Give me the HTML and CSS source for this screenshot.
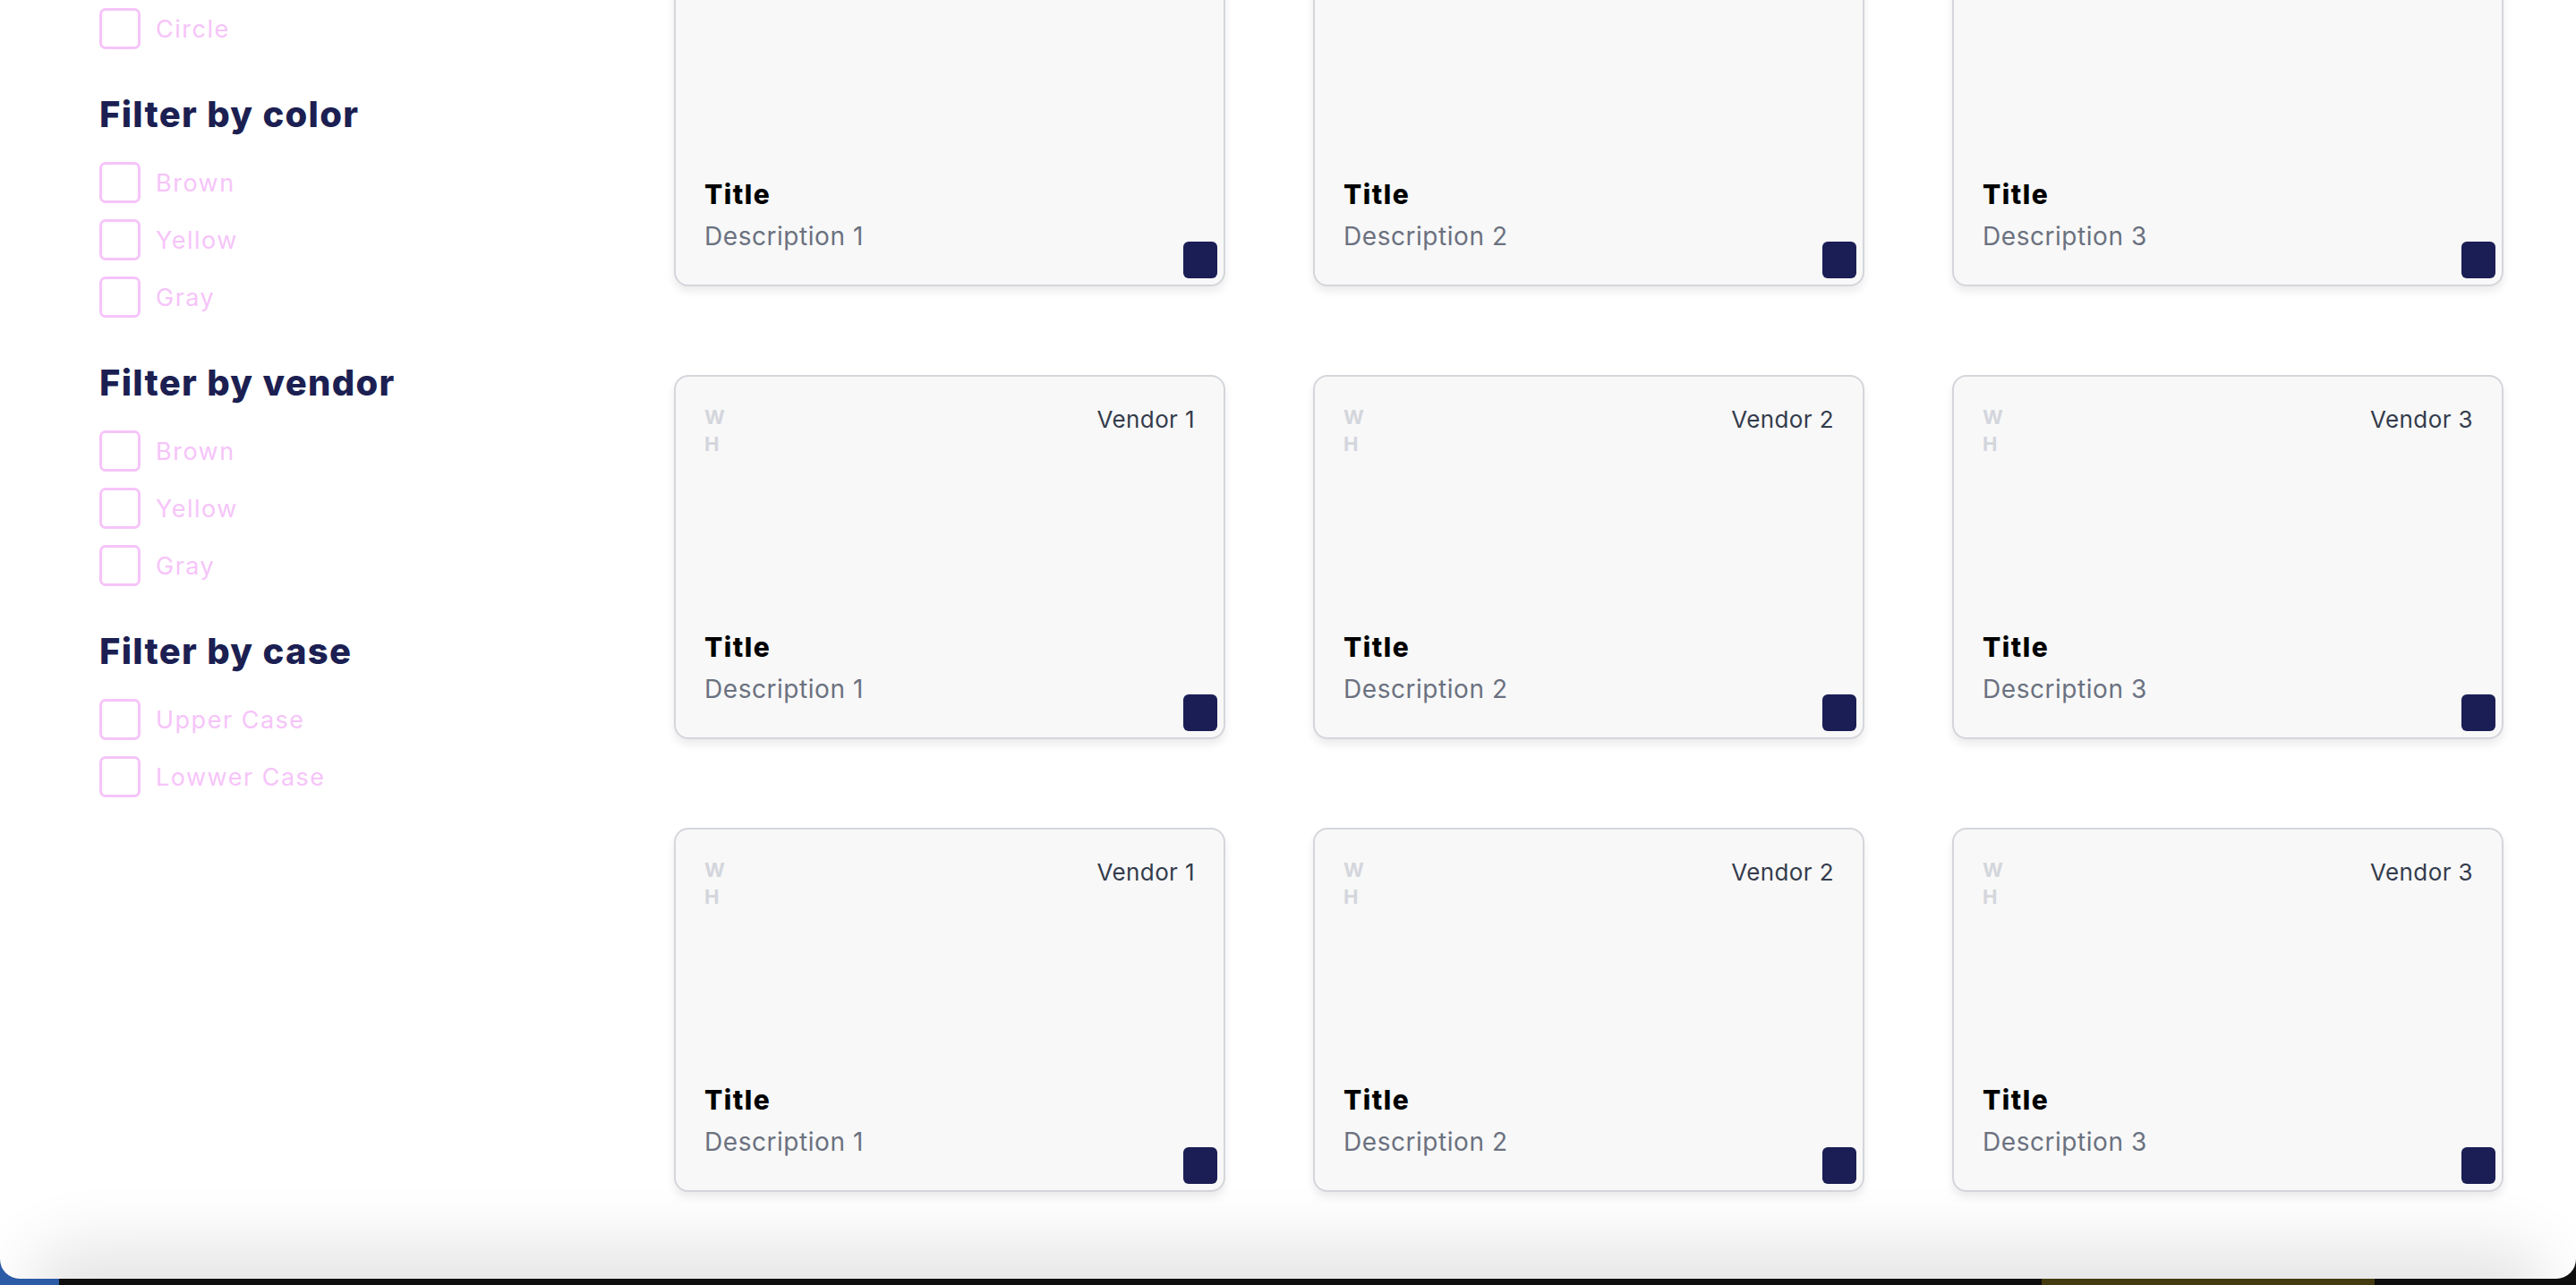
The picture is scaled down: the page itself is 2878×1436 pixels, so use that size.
FILE: index.html
```html
<!DOCTYPE html>
<html lang="en">
<head>
<meta charset="utf-8">
<title>Catalog</title>
<link rel="stylesheet" href="styles.css">
</head>
<body>
<div class="window">
  <div class="page">
    <aside class="sidebar">
      <section class="filter-group">
        <h3 class="filter-title">Filter by shape</h3>
        <ul class="options">
          <li class="option"><span class="box"></span>Square</li>
          <li class="option"><span class="box"></span>Triangle</li>
          <li class="option"><span class="box"></span>Circle</li>
        </ul>
      </section>
      <section class="filter-group">
        <h3 class="filter-title">Filter by color</h3>
        <ul class="options">
          <li class="option"><span class="box"></span>Brown</li>
          <li class="option"><span class="box"></span>Yellow</li>
          <li class="option"><span class="box"></span>Gray</li>
        </ul>
      </section>
      <section class="filter-group">
        <h3 class="filter-title">Filter by vendor</h3>
        <ul class="options">
          <li class="option"><span class="box"></span>Brown</li>
          <li class="option"><span class="box"></span>Yellow</li>
          <li class="option"><span class="box"></span>Gray</li>
        </ul>
      </section>
      <section class="filter-group">
        <h3 class="filter-title">Filter by case</h3>
        <ul class="options">
          <li class="option"><span class="box"></span>Upper Case</li>
          <li class="option"><span class="box"></span>Lowwer Case</li>
        </ul>
      </section>
    </aside>
    <main class="grid">
      <article class="card"><div class="card-top"><div class="dims"><span>W</span><span>H</span></div><span class="vendor">Vendor 1</span></div><div class="card-bottom"><div class="title">Title</div><div class="desc">Description 1</div></div><span class="swatch"></span></article>
      <article class="card"><div class="card-top"><div class="dims"><span>W</span><span>H</span></div><span class="vendor">Vendor 2</span></div><div class="card-bottom"><div class="title">Title</div><div class="desc">Description 2</div></div><span class="swatch"></span></article>
      <article class="card"><div class="card-top"><div class="dims"><span>W</span><span>H</span></div><span class="vendor">Vendor 3</span></div><div class="card-bottom"><div class="title">Title</div><div class="desc">Description 3</div></div><span class="swatch"></span></article>
      <article class="card"><div class="card-top"><div class="dims"><span>W</span><span>H</span></div><span class="vendor">Vendor 1</span></div><div class="card-bottom"><div class="title">Title</div><div class="desc">Description 1</div></div><span class="swatch"></span></article>
      <article class="card"><div class="card-top"><div class="dims"><span>W</span><span>H</span></div><span class="vendor">Vendor 2</span></div><div class="card-bottom"><div class="title">Title</div><div class="desc">Description 2</div></div><span class="swatch"></span></article>
      <article class="card"><div class="card-top"><div class="dims"><span>W</span><span>H</span></div><span class="vendor">Vendor 3</span></div><div class="card-bottom"><div class="title">Title</div><div class="desc">Description 3</div></div><span class="swatch"></span></article>
      <article class="card"><div class="card-top"><div class="dims"><span>W</span><span>H</span></div><span class="vendor">Vendor 1</span></div><div class="card-bottom"><div class="title">Title</div><div class="desc">Description 1</div></div><span class="swatch"></span></article>
      <article class="card"><div class="card-top"><div class="dims"><span>W</span><span>H</span></div><span class="vendor">Vendor 2</span></div><div class="card-bottom"><div class="title">Title</div><div class="desc">Description 2</div></div><span class="swatch"></span></article>
      <article class="card"><div class="card-top"><div class="dims"><span>W</span><span>H</span></div><span class="vendor">Vendor 3</span></div><div class="card-bottom"><div class="title">Title</div><div class="desc">Description 3</div></div><span class="swatch"></span></article>
    </main>
  </div>
  <div class="bottom-fade"></div>
</div>
</body>
</html>
```

FILE: styles.css
```css
* { box-sizing: border-box; }

html, body { height: 100%; }

body {
  margin: 0;
  min-height: 100vh;
  font-family: Inter, "Noto Sans", sans-serif;
  background: linear-gradient(to right,
    #2b5aa6 0, #2b5aa6 66px,
    #0e0e0e 66px, #0e0e0e 2281px,
    #443b10 2281px, #443b10 2653px,
    #0e0e0e 2653px);
}

.window {
  position: relative;
  height: 1429px;
  background: #ffffff;
  border-radius: 0 0 22px 22px;
  overflow: hidden;
}

.page {
  display: flex;
  align-items: flex-start;
  margin-top: -196px;
}

/* Sidebar */
.sidebar {
  flex: none;
  width: 753px;
  padding-left: 111px;
  display: flex;
  flex-direction: column;
  gap: 49px;
}

.filter-title {
  margin: 0 0 29px;
  font-size: 40px;
  line-height: 48px;
  font-weight: 800;
  letter-spacing: 1.3px;
  color: #1c1f52;
}

.options {
  list-style: none;
  margin: 0;
  padding: 0;
  display: flex;
  flex-direction: column;
  gap: 18px;
}

.option {
  display: flex;
  align-items: center;
  gap: 17px;
  height: 46px;
  font-size: 27px;
  letter-spacing: 1.5px;
  color: #f6c4f9;
}

.box {
  flex: none;
  width: 46px;
  height: 46px;
  border: 3.5px solid #f6c4f9;
  border-radius: 7px;
}

/* Grid */
.grid {
  flex: none;
  margin-top: 109px;
  display: grid;
  grid-template-columns: repeat(3, 616px);
  column-gap: 98px;
  row-gap: 99px;
}

.card {
  position: relative;
  height: 407px;
  padding: 30px 32px 34px;
  background: #f8f8f8;
  border: 2px solid #d4d6db;
  border-radius: 16px;
  box-shadow: 0 6px 10px rgba(0, 0, 0, 0.08);
  display: flex;
  flex-direction: column;
  justify-content: space-between;
}

.card-top {
  display: flex;
  justify-content: space-between;
  align-items: flex-start;
}

.dims {
  display: flex;
  flex-direction: column;
  font-size: 22px;
  line-height: 30px;
  font-weight: 700;
  color: #d3d6dc;
}

.vendor {
  font-size: 26px;
  line-height: 36px;
  letter-spacing: 0.4px;
  color: #343c4c;
}

.title {
  font-size: 30px;
  line-height: 38px;
  font-weight: 800;
  color: #000000;
  letter-spacing: 1.5px;
}

.desc {
  margin-top: 8px;
  font-size: 28px;
  line-height: 40px;
  letter-spacing: 0.55px;
  color: #6b7180;
}

.swatch {
  position: absolute;
  right: 7px;
  bottom: 7px;
  width: 38px;
  height: 41px;
  border-radius: 6px;
  background: #1b1e55;
}

/* bottom window fade */
.bottom-fade {
  position: absolute;
  left: 70px;
  right: 70px;
  bottom: -40px;
  height: 40px;
  border-radius: 40px;
  background: rgba(0, 0, 0, 0.1);
  box-shadow: 0 0 70px 40px rgba(0, 0, 0, 0.1);
  pointer-events: none;
}
```
